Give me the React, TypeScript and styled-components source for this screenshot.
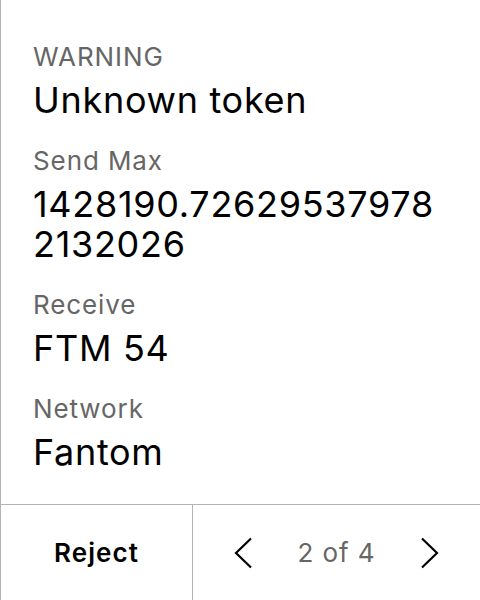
import React from "react";
import styled, { createGlobalStyle } from "styled-components";

const Global = createGlobalStyle`
  html, body { margin: 0; padding: 0; background: #ffffff; }
  body { font-family: Inter, "Noto Sans", sans-serif; }
`;

const Screen = styled.div`
  width: 480px;
  height: 600px;
  box-sizing: border-box;
  border-left: 1px solid #b4b4b4;
  display: flex;
  flex-direction: column;
  background: #fff;
`;

const Content = styled.div`
  flex: 1;
  padding: 41px 32px 0 32px;
  display: flex;
  flex-direction: column;
  gap: 25px;
`;

const Field = styled.div`
  display: flex;
  flex-direction: column;
  gap: 7px;
`;

const Label = styled.div`
  font-size: 26px;
  line-height: 32px;
  letter-spacing: 0.9px;
  color: #666666;
`;

const Value = styled.div`
  font-size: 36px;
  line-height: 40px;
  letter-spacing: 0.7px;
  color: #000;
  word-break: break-all;
`;

const Footer = styled.div`
  height: 96px;
  box-sizing: border-box;
  border-top: 1px solid #b4b4b4;
  display: flex;
`;

const RejectCell = styled.div`
  width: 191px;
  border-right: 1px solid #b4b4b4;
  display: flex;
  align-items: center;
  justify-content: center;
  font-size: 26px;
  font-weight: 600;
  letter-spacing: 1.1px;
  color: #000;
`;

const Nav = styled.div`
  flex: 1;
  display: flex;
  align-items: center;
  justify-content: space-between;
  padding: 0 40px;
`;

const PageText = styled.div`
  font-size: 26px;
  letter-spacing: 0.9px;
  color: #666666;
`;

const Chevron = ({ dir }: { dir: "left" | "right" }) => (
  <svg width="20" height="32" viewBox="0 0 20 32" fill="none">
    <path
      d={dir === "left" ? "M18 1.5 L3 16 L18 30.5" : "M2 1.5 L17 16 L2 30.5"}
      stroke="#000"
      strokeWidth="2.2"
    />
  </svg>
);

const fields = [
  { label: "WARNING", value: "Unknown token" },
  { label: "Send Max", value: "1428190.726295379782132026" },
  { label: "Receive", value: "FTM 54" },
  { label: "Network", value: "Fantom" },
];

export default function App() {
  return (
    <>
      <Global />
      <Screen>
        <Content>
          {fields.map((f) => (
            <Field key={f.label}>
              <Label>{f.label}</Label>
              <Value>{f.value}</Value>
            </Field>
          ))}
        </Content>
        <Footer>
          <RejectCell>Reject</RejectCell>
          <Nav>
            <Chevron dir="left" />
            <PageText>2 of 4</PageText>
            <Chevron dir="right" />
          </Nav>
        </Footer>
      </Screen>
    </>
  );
}
